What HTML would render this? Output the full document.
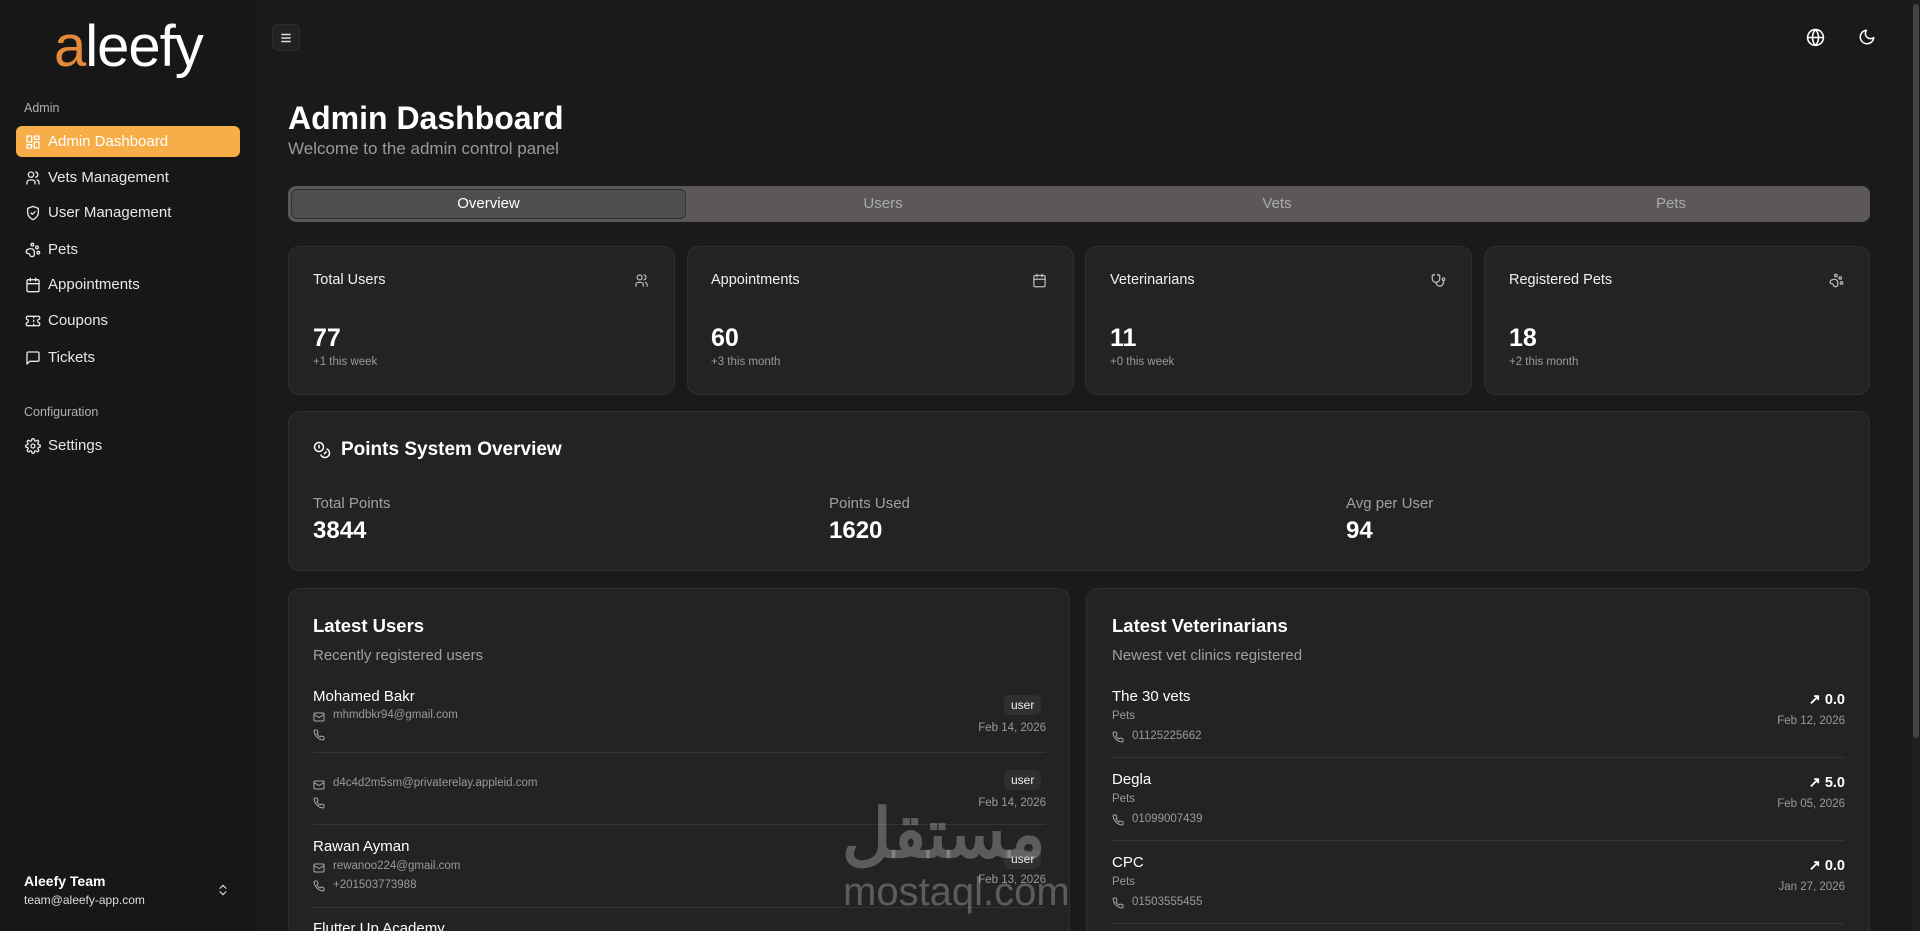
<!DOCTYPE html>
<html style="width:1920px;height:931px;overflow:hidden"><head><meta charset="utf-8"><style>
*{box-sizing:border-box;margin:0;padding:0}
body{width:1920px;height:931px;overflow:hidden;background:#1a1a1a;font-family:"Liberation Sans",sans-serif;color:#fff}
#w{position:relative;width:1920px;height:931px;overflow:hidden}
.a{position:absolute}
.side{left:0;top:0;width:257px;height:931px;background:#171717}
.nav{left:16px;width:224px;height:31px;border-radius:6px;display:flex;align-items:center;padding-left:9px;font-size:15px;color:#e8e8e8;gap:7px}
.nav svg{width:16px;height:16px;fill:none;stroke:currentColor;stroke-width:2;stroke-linecap:round;stroke-linejoin:round}
.lbl{font-size:12.5px;color:#b0b0b0}
.card{background:#232323;border:1px solid #2f2f2f;border-radius:12px}
.ct{font-size:14.5px;color:#f0f0f0}
.num{font-size:25px;font-weight:bold}
.sub{font-size:11.5px;color:#9a9a9a}
.ic{width:15px;height:15px;fill:none;stroke:#bbb;stroke-width:2;stroke-linecap:round;stroke-linejoin:round}
.sep{height:1px;background:#343434}
.gray{color:#a0a0a0}
.badge{background:#2f2f2f;border-radius:6px;font-size:12px;padding:3px 7px;color:#eee}
</style></head><body><div id="w">
<div class="a side"></div>
<div class="a" style="left:54px;top:18px;font-size:58px;color:#fff;letter-spacing:-1px;line-height:1"><span style="color:#e48a3a">a</span>leefy</div>
<div class="a lbl" style="left:24px;top:101px">Admin</div>
<div class="a nav" style="top:126px;background:#f7ae48;color:#fff"><svg viewBox="0 0 24 24"><rect x="3" y="3" width="7" height="9"/><rect x="14" y="3" width="7" height="5"/><rect x="14" y="12" width="7" height="9"/><rect x="3" y="16" width="7" height="5"/></svg>Admin Dashboard</div>
<div class="a nav" style="top:162px"><svg viewBox="0 0 24 24"><circle cx="9" cy="7" r="4"/><path d="M3 21v-2a4 4 0 0 1 4-4h4a4 4 0 0 1 4 4v2M16 3.1a4 4 0 0 1 0 7.8M21 21v-2a4 4 0 0 0-3-3.9"/></svg>Vets Management</div>
<div class="a nav" style="top:197px"><svg viewBox="0 0 24 24"><path d="M12 22s8-4 8-10V5l-8-3-8 3v7c0 6 8 10 8 10z"/><path d="M9 12l2 2 4-4"/></svg>User Management</div>
<div class="a nav" style="top:234px"><svg viewBox="0 0 24 24"><circle cx="11" cy="4" r="2"/><circle cx="18" cy="8" r="2"/><circle cx="20" cy="16" r="2"/><path d="M9 10a5 5 0 0 1 5 5v3.5a3.5 3.5 0 0 1-6.8 1.1 3.5 3.5 0 0 0-4.3-2.6A3.5 3.5 0 0 1 5 11a5 5 0 0 1 4-1z"/></svg>Pets</div>
<div class="a nav" style="top:269px"><svg viewBox="0 0 24 24"><rect x="3" y="4" width="18" height="18" rx="2"/><path d="M16 2v4M8 2v4M3 10h18"/></svg>Appointments</div>
<div class="a nav" style="top:305px"><svg viewBox="0 0 24 24"><path d="M2 9a3 3 0 0 1 0 6v2a2 2 0 0 0 2 2h16a2 2 0 0 0 2-2v-2a3 3 0 0 1 0-6V7a2 2 0 0 0-2-2H4a2 2 0 0 0-2 2z"/><path d="M13 5v2M13 17v2M13 11v2"/></svg>Coupons</div>
<div class="a nav" style="top:342px"><svg viewBox="0 0 24 24"><path d="M21 15a2 2 0 0 1-2 2H7l-4 4V5a2 2 0 0 1 2-2h14a2 2 0 0 1 2 2z"/></svg>Tickets</div>
<div class="a lbl" style="left:24px;top:405px">Configuration</div>
<div class="a nav" style="top:430px"><svg viewBox="0 0 24 24"><circle cx="12" cy="12" r="3"/><path d="M19.4 15a1.7 1.7 0 0 0 .3 1.8l.1.1a2 2 0 1 1-2.8 2.8l-.1-.1a1.7 1.7 0 0 0-1.8-.3 1.7 1.7 0 0 0-1 1.5V21a2 2 0 0 1-4 0v-.1a1.7 1.7 0 0 0-1.1-1.5 1.7 1.7 0 0 0-1.8.3l-.1.1a2 2 0 1 1-2.8-2.8l.1-.1a1.7 1.7 0 0 0 .3-1.8 1.7 1.7 0 0 0-1.5-1H3a2 2 0 0 1 0-4h.1a1.7 1.7 0 0 0 1.5-1.1 1.7 1.7 0 0 0-.3-1.8l-.1-.1a2 2 0 1 1 2.8-2.8l.1.1a1.7 1.7 0 0 0 1.8.3H9a1.7 1.7 0 0 0 1-1.5V3a2 2 0 0 1 4 0v.1a1.7 1.7 0 0 0 1 1.5 1.7 1.7 0 0 0 1.8-.3l.1-.1a2 2 0 1 1 2.8 2.8l-.1.1a1.7 1.7 0 0 0-.3 1.8V9a1.7 1.7 0 0 0 1.5 1H21a2 2 0 0 1 0 4h-.1a1.7 1.7 0 0 0-1.5 1z"/></svg>Settings</div>
<div class="a" style="left:24px;top:873px;font-size:14px;font-weight:bold">Aleefy Team</div>
<div class="a" style="left:24px;top:893px;font-size:12px;color:#ddd">team@aleefy-app.com</div>
<svg class="a" style="left:216px;top:882px" width="14" height="16" viewBox="0 0 24 24" fill="none" stroke="#ddd" stroke-width="2" stroke-linecap="round"><path d="M7 15l5 5 5-5M7 9l5-5 5 5"/></svg>

<div class="a" style="left:272px;top:24px;width:28px;height:27px;border:1px solid #2c2c2c;background:#222;border-radius:6px"></div>
<svg class="a" style="left:279px;top:31px" width="14" height="14" viewBox="0 0 24 24" fill="none" stroke="#ddd" stroke-width="2.5"><path d="M4 6h16M4 12h16M4 18h16"/></svg>
<svg class="a" style="left:1806px;top:28px" width="19" height="19" viewBox="0 0 24 24" fill="none" stroke="#fff" stroke-width="2"><circle cx="12" cy="12" r="10"/><path d="M2 12h20M12 2a15 15 0 0 1 0 20M12 2a15 15 0 0 0 0 20"/></svg>
<svg class="a" style="left:1858px;top:28px" width="18" height="18" viewBox="0 0 24 24" fill="none" stroke="#fff" stroke-width="2" stroke-linejoin="round"><path d="M21 12.8A9 9 0 1 1 11.2 3a7 7 0 0 0 9.8 9.8z"/></svg>

<div class="a" style="left:288px;top:100px;font-size:32px;font-weight:bold">Admin Dashboard</div>
<div class="a" style="left:288px;top:139px;font-size:17px;color:#9a9a9a">Welcome to the admin control panel</div>

<div class="a" style="left:288px;top:186px;width:1582px;height:36px;background:#5b5857;border-radius:8px"></div>
<div class="a" style="left:291px;top:189px;width:395px;height:30px;background:#4f4e4d;border:1px solid #333;border-radius:6px;text-align:center;line-height:28px;font-size:15px">Overview</div>
<div class="a" style="left:686px;top:189px;width:394px;text-align:center;line-height:30px;font-size:15px;color:#aaa">Users</div>
<div class="a" style="left:1080px;top:189px;width:394px;text-align:center;line-height:30px;font-size:15px;color:#aaa">Vets</div>
<div class="a" style="left:1474px;top:189px;width:394px;text-align:center;line-height:30px;font-size:15px;color:#aaa">Pets</div>

<div class="a card" style="left:288px;top:246px;width:387px;height:149px"></div>
<div class="a card" style="left:687px;top:246px;width:387px;height:149px"></div>
<div class="a card" style="left:1085px;top:246px;width:387px;height:149px"></div>
<div class="a card" style="left:1484px;top:246px;width:386px;height:149px"></div>
<div class="a ct" style="left:313px;top:272px">Total Users</div>
<div class="a ct" style="left:711px;top:272px">Appointments</div>
<div class="a ct" style="left:1110px;top:272px">Veterinarians</div>
<div class="a ct" style="left:1509px;top:272px">Registered Pets</div>
<svg class="a ic" style="left:634px;top:273px" viewBox="0 0 24 24"><circle cx="9" cy="7" r="4"/><path d="M3 21v-2a4 4 0 0 1 4-4h4a4 4 0 0 1 4 4v2M16 3.1a4 4 0 0 1 0 7.8M21 21v-2a4 4 0 0 0-3-3.9"/></svg>
<svg class="a ic" style="left:1032px;top:273px" viewBox="0 0 24 24"><rect x="3" y="4" width="18" height="18" rx="2"/><path d="M16 2v4M8 2v4M3 10h18"/></svg>
<svg class="a ic" style="left:1431px;top:273px" viewBox="0 0 24 24"><path d="M5 2v2M11 2v2M5 3H4a2 2 0 0 0-2 2v4a6 6 0 0 0 12 0V5a2 2 0 0 0-2-2h-1M8 15a6 6 0 0 0 12 0v-3"/><circle cx="20" cy="10" r="2"/></svg>
<svg class="a ic" style="left:1829px;top:273px" viewBox="0 0 24 24"><circle cx="11" cy="4" r="2"/><circle cx="18" cy="8" r="2"/><circle cx="20" cy="16" r="2"/><path d="M9 10a5 5 0 0 1 5 5v3.5a3.5 3.5 0 0 1-6.8 1.1 3.5 3.5 0 0 0-4.3-2.6A3.5 3.5 0 0 1 5 11a5 5 0 0 1 4-1z"/></svg>
<div class="a num" style="left:313px;top:324px">77</div><div class="a sub" style="left:313px;top:356px">+1 this week</div>
<div class="a num" style="left:711px;top:324px">60</div><div class="a sub" style="left:711px;top:356px">+3 this month</div>
<div class="a num" style="left:1110px;top:324px">11</div><div class="a sub" style="left:1110px;top:356px">+0 this week</div>
<div class="a num" style="left:1509px;top:324px">18</div><div class="a sub" style="left:1509px;top:356px">+2 this month</div>

<div class="a card" style="left:288px;top:411px;width:1582px;height:160px"></div>
<svg class="a" style="left:313px;top:441px" width="18" height="18" viewBox="0 0 24 24" fill="none" stroke="#fff" stroke-width="2"><circle cx="8" cy="8" r="6"/><path d="M18.1 10.4A6 6 0 1 1 10.3 18"/><path d="M7 6h1v4M16.7 13.9l.7.7-2.8 2.8"/></svg>
<div class="a" style="left:341px;top:439px;font-size:19px;font-weight:bold">Points System Overview</div>
<div class="a gray" style="left:313px;top:495px;font-size:15px">Total Points</div>
<div class="a" style="left:313px;top:517px;font-size:24px;font-weight:bold">3844</div>
<div class="a gray" style="left:829px;top:495px;font-size:15px">Points Used</div>
<div class="a" style="left:829px;top:517px;font-size:24px;font-weight:bold">1620</div>
<div class="a gray" style="left:1346px;top:495px;font-size:15px">Avg per User</div>
<div class="a" style="left:1346px;top:517px;font-size:24px;font-weight:bold">94</div>

<div class="a card" style="left:288px;top:588px;width:782px;height:400px"></div>
<div class="a card" style="left:1086px;top:588px;width:784px;height:400px"></div>
<div class="a" style="left:313px;top:615px;font-size:18.5px;font-weight:bold">Latest Users</div>
<div class="a gray" style="left:313px;top:647px;font-size:15px">Recently registered users</div>

<div class="a" style="left:313px;top:688px;font-size:15px">Mohamed Bakr</div>
<div class="a sub" style="left:333px;top:709px">mhmdbkr94@gmail.com</div>
<div class="a badge" style="left:1004px;top:695px">user</div>
<div class="a sub" style="left:973px;top:722px;width:73px;text-align:right">Feb 14, 2026</div>
<div class="a sep" style="left:313px;top:752px;width:733px"></div>
<div class="a sub" style="left:333px;top:777px">d4c4d2m5sm@privaterelay.appleid.com</div>
<div class="a badge" style="left:1004px;top:770px">user</div>
<div class="a sub" style="left:973px;top:797px;width:73px;text-align:right">Feb 14, 2026</div>
<div class="a sep" style="left:313px;top:824px;width:733px"></div>
<div class="a" style="left:313px;top:838px;font-size:15px">Rawan Ayman</div>
<div class="a sub" style="left:333px;top:860px">rewanoo224@gmail.com</div>
<div class="a sub" style="left:333px;top:879px">+201503773988</div>
<div class="a badge" style="left:1004px;top:849px">user</div>
<div class="a sub" style="left:973px;top:874px;width:73px;text-align:right">Feb 13, 2026</div>
<div class="a sep" style="left:313px;top:907px;width:733px"></div>
<div class="a" style="left:313px;top:920px;font-size:15px">Flutter Up Academy</div>
<svg class="a" style="left:313px;top:711px" width="12" height="12" viewBox="0 0 24 24" fill="none" stroke="#aaa" stroke-width="2"><rect x="2" y="4" width="20" height="16" rx="2"/><path d="M22 7l-10 6L2 7"/></svg>
<svg class="a" style="left:313px;top:779px" width="12" height="12" viewBox="0 0 24 24" fill="none" stroke="#aaa" stroke-width="2"><rect x="2" y="4" width="20" height="16" rx="2"/><path d="M22 7l-10 6L2 7"/></svg>
<svg class="a" style="left:313px;top:862px" width="12" height="12" viewBox="0 0 24 24" fill="none" stroke="#aaa" stroke-width="2"><rect x="2" y="4" width="20" height="16" rx="2"/><path d="M22 7l-10 6L2 7"/></svg>
<svg class="a" style="left:313px;top:729px" width="12" height="12" viewBox="0 0 24 24" fill="none" stroke="#aaa" stroke-width="2"><path d="M22 16.9v3a2 2 0 0 1-2.2 2 19.8 19.8 0 0 1-8.6-3.1 19.5 19.5 0 0 1-6-6A19.8 19.8 0 0 1 2.1 4.2 2 2 0 0 1 4.1 2h3a2 2 0 0 1 2 1.7c.1 1 .4 1.900.7 2.8a2 2 0 0 1-.5 2.1L8 9.9a16 16 0 0 0 6 6l1.3-1.3a2 2 0 0 1 2.1-.4c.9.3 1.8.6 2.8.7a2 2 0 0 1 1.7 2z"/></svg>
<svg class="a" style="left:313px;top:797px" width="12" height="12" viewBox="0 0 24 24" fill="none" stroke="#aaa" stroke-width="2"><path d="M22 16.9v3a2 2 0 0 1-2.2 2 19.8 19.8 0 0 1-8.6-3.1 19.5 19.5 0 0 1-6-6A19.8 19.8 0 0 1 2.1 4.2 2 2 0 0 1 4.1 2h3a2 2 0 0 1 2 1.7c.1 1 .4 1.9.7 2.8a2 2 0 0 1-.5 2.1L8 9.9a16 16 0 0 0 6 6l1.3-1.3a2 2 0 0 1 2.1-.4c.9.3 1.8.6 2.8.7a2 2 0 0 1 1.7 2z"/></svg>
<svg class="a" style="left:313px;top:880px" width="12" height="12" viewBox="0 0 24 24" fill="none" stroke="#aaa" stroke-width="2"><path d="M22 16.9v3a2 2 0 0 1-2.2 2 19.8 19.8 0 0 1-8.6-3.1 19.5 19.5 0 0 1-6-6A19.8 19.8 0 0 1 2.1 4.2 2 2 0 0 1 4.1 2h3a2 2 0 0 1 2 1.7c.1 1 .4 1.9.7 2.8a2 2 0 0 1-.5 2.1L8 9.9a16 16 0 0 0 6 6l1.3-1.3a2 2 0 0 1 2.1-.4c.9.3 1.8.6 2.8.7a2 2 0 0 1 1.7 2z"/></svg>

<div class="a" style="left:1112px;top:615px;font-size:18.5px;font-weight:bold">Latest Veterinarians</div>
<div class="a gray" style="left:1112px;top:647px;font-size:15px">Newest vet clinics registered</div>

<div class="a" style="left:1112px;top:688px;font-size:15px">The 30 vets</div>
<div class="a sub" style="left:1112px;top:710px">Pets</div>
<div class="a sub" style="left:1132px;top:730px">01125225662</div>
<div class="a" style="left:1760px;top:692px;width:85px;text-align:right;font-size:14.5px;font-weight:bold">↗ 0.0</div>
<div class="a sub" style="left:1745px;top:715px;width:100px;text-align:right">Feb 12, 2026</div>
<div class="a sep" style="left:1112px;top:757px;width:733px"></div>
<div class="a" style="left:1112px;top:771px;font-size:15px">Degla</div>
<div class="a sub" style="left:1112px;top:793px">Pets</div>
<div class="a sub" style="left:1132px;top:813px">01099007439</div>
<div class="a" style="left:1760px;top:775px;width:85px;text-align:right;font-size:14.5px;font-weight:bold">↗ 5.0</div>
<div class="a sub" style="left:1745px;top:798px;width:100px;text-align:right">Feb 05, 2026</div>
<div class="a sep" style="left:1112px;top:840px;width:733px"></div>
<div class="a" style="left:1112px;top:854px;font-size:15px">CPC</div>
<div class="a sub" style="left:1112px;top:876px">Pets</div>
<div class="a sub" style="left:1132px;top:896px">01503555455</div>
<div class="a" style="left:1760px;top:858px;width:85px;text-align:right;font-size:14.5px;font-weight:bold">↗ 0.0</div>
<div class="a sub" style="left:1745px;top:881px;width:100px;text-align:right">Jan 27, 2026</div>
<div class="a sep" style="left:1112px;top:923px;width:733px"></div>
<svg class="a" style="left:1112px;top:731px" width="12" height="12" viewBox="0 0 24 24" fill="none" stroke="#aaa" stroke-width="2"><path d="M22 16.9v3a2 2 0 0 1-2.2 2 19.8 19.8 0 0 1-8.6-3.1 19.5 19.5 0 0 1-6-6A19.8 19.8 0 0 1 2.1 4.2 2 2 0 0 1 4.1 2h3a2 2 0 0 1 2 1.7c.1 1 .4 1.9.7 2.8a2 2 0 0 1-.5 2.1L8 9.9a16 16 0 0 0 6 6l1.3-1.3a2 2 0 0 1 2.1-.4c.9.3 1.8.6 2.8.7a2 2 0 0 1 1.7 2z"/></svg>
<svg class="a" style="left:1112px;top:814px" width="12" height="12" viewBox="0 0 24 24" fill="none" stroke="#aaa" stroke-width="2"><path d="M22 16.9v3a2 2 0 0 1-2.2 2 19.8 19.8 0 0 1-8.6-3.1 19.5 19.5 0 0 1-6-6A19.8 19.8 0 0 1 2.1 4.2 2 2 0 0 1 4.1 2h3a2 2 0 0 1 2 1.7c.1 1 .4 1.9.7 2.8a2 2 0 0 1-.5 2.1L8 9.9a16 16 0 0 0 6 6l1.3-1.3a2 2 0 0 1 2.1-.4c.9.3 1.8.6 2.8.7a2 2 0 0 1 1.7 2z"/></svg>
<svg class="a" style="left:1112px;top:897px" width="12" height="12" viewBox="0 0 24 24" fill="none" stroke="#aaa" stroke-width="2"><path d="M22 16.9v3a2 2 0 0 1-2.2 2 19.8 19.8 0 0 1-8.6-3.1 19.5 19.5 0 0 1-6-6A19.8 19.8 0 0 1 2.1 4.2 2 2 0 0 1 4.1 2h3a2 2 0 0 1 2 1.7c.1 1 .4 1.9.7 2.8a2 2 0 0 1-.5 2.1L8 9.9a16 16 0 0 0 6 6l1.3-1.3a2 2 0 0 1 2.1-.4c.9.3 1.8.6 2.8.7a2 2 0 0 1 1.7 2z"/></svg>

<div class="a" style="left:842px;top:795px;font-size:68px;font-weight:bold;color:rgba(200,200,200,0.35);font-family:'Liberation Sans','Noto Sans CJK SC',sans-serif">مستقل</div>
<div class="a" style="left:843px;top:870px;font-size:40px;color:rgba(200,200,200,0.35)">mostaql.com</div>

<div class="a" style="left:1912px;top:0;width:8px;height:931px;background:#1e1e1e"></div>
<div class="a" style="left:1913px;top:4px;width:6px;height:734px;background:#444;border-radius:3px"></div>
</div></body></html>
